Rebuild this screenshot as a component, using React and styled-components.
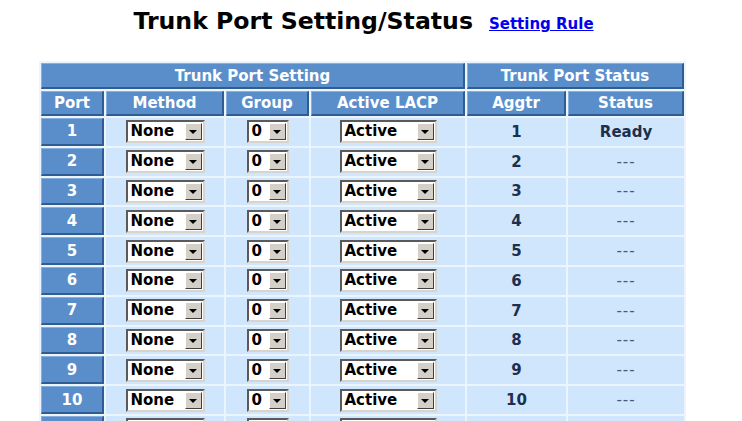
import React from 'react'
import styled, { createGlobalStyle } from 'styled-components'

const GlobalStyle = createGlobalStyle`
  html, body {
    margin: 0;
    padding: 0;
    background: #ffffff;
    overflow: hidden;
  }
  body {
    font-family: 'DejaVu Sans', Verdana, sans-serif;
  }
`

const Page = styled.div`
  width: 649px;
  margin-left: 39px;
`

const TitleRow = styled.div`
  display: flex;
  align-items: baseline;
  justify-content: center;
  gap: 16px;
  margin: 7px 0 23px;
  line-height: 28px;
`

const Title = styled.h1`
  margin: 0;
  font-size: 23.6px;
  font-weight: bold;
  color: #000;
`

const RuleLink = styled.a`
  font-size: 15px;
  font-weight: bold;
  color: #0000ee;
  text-decoration: underline;
`

const Table = styled.table`
  width: 647px;
  table-layout: fixed;
  border-collapse: separate;
  border-spacing: 2px;
  background: #ecf5fe;
`

const HeadCell = styled.th`
  height: ${({ $h }) => $h || 25}px;
  padding: 0;
  box-sizing: border-box;
  background: #5a8ecb;
  border-top: 1px solid #86b0df;
  border-left: 1px solid #86b0df;
  border-bottom: 2px solid #2f5d92;
  border-right: 2px solid #2f5d92;
  color: #ffffff;
  font-size: 15px;
  font-weight: bold;
  text-align: center;
  vertical-align: middle;
`

const PortCell = styled(HeadCell).attrs({ as: 'td' })`
  height: 27.8px;
`

const DataCell = styled.td`
  height: 27.8px;
  padding: 0;
  background: #d0e6fc;
  color: #1d2f4e;
  font-size: 15px;
  font-weight: bold;
  text-align: center;
  vertical-align: middle;
`

const Dash = styled.span`
  color: #4a5a74;
  letter-spacing: 1px;
  font-weight: normal;
`

const SelectBox = styled.div`
  display: inline-flex;
  align-items: stretch;
  box-sizing: border-box;
  width: ${({ $w }) => $w}px;
  height: 23px;
  vertical-align: middle;
  background: #ffffff;
  border-top: 2px solid #5a5a5a;
  border-left: 2px solid #5a5a5a;
  border-bottom: 2px solid #d8d4cc;
  border-right: 2px solid #d8d4cc;
  text-align: left;
`

const SelectValue = styled.span`
  flex: 1;
  padding-left: 3px;
  font-size: 15px;
  font-weight: bold;
  line-height: 19px;
  color: #000;
  overflow: hidden;
  white-space: nowrap;
`

const ArrowButton = styled.span`
  display: flex;
  align-items: center;
  justify-content: center;
  box-sizing: border-box;
  width: 17px;
  margin: 1px 1px 1px 0;
  background: #d4d0c8;
  border-top: 1px solid #ffffff;
  border-left: 1px solid #ffffff;
  border-bottom: 1px solid #404040;
  border-right: 1px solid #404040;
`

const Triangle = styled.span`
  width: 0;
  height: 0;
  border-left: 4px solid transparent;
  border-right: 4px solid transparent;
  border-top: 4px solid #000;
  margin-top: 1px;
`

const Select = ({ value, width }) => (
  <SelectBox $w={width}>
    <SelectValue>{value}</SelectValue>
    <ArrowButton>
      <Triangle />
    </ArrowButton>
  </SelectBox>
)

const ports = Array.from({ length: 12 }, (_, i) => i + 1)

export default function App() {
  return (
    <>
      <GlobalStyle />
      <Page>
        <TitleRow>
          <Title>Trunk Port Setting/Status</Title>
          <RuleLink href='#'>Setting Rule</RuleLink>
        </TitleRow>
        <Table>
          <colgroup>
            <col style={{ width: 63 }} />
            <col style={{ width: 118 }} />
            <col style={{ width: 83 }} />
            <col style={{ width: 154 }} />
            <col style={{ width: 99 }} />
            <col style={{ width: 116 }} />
          </colgroup>
          <thead>
            <tr>
              <HeadCell colSpan={4} $h={26}>
                Trunk Port Setting
              </HeadCell>
              <HeadCell colSpan={2} $h={26}>
                Trunk Port Status
              </HeadCell>
            </tr>
            <tr>
              <HeadCell>Port</HeadCell>
              <HeadCell>Method</HeadCell>
              <HeadCell>Group</HeadCell>
              <HeadCell>Active LACP</HeadCell>
              <HeadCell>Aggtr</HeadCell>
              <HeadCell>Status</HeadCell>
            </tr>
          </thead>
          <tbody>
            {ports.map((p) => (
              <tr key={p}>
                <PortCell>{p}</PortCell>
                <DataCell>
                  <Select value='None' width={79} />
                </DataCell>
                <DataCell>
                  <Select value='0' width={42} />
                </DataCell>
                <DataCell>
                  <Select value='Active' width={97} />
                </DataCell>
                <DataCell>{p}</DataCell>
                <DataCell>{p === 1 ? 'Ready' : <Dash>---</Dash>}</DataCell>
              </tr>
            ))}
          </tbody>
        </Table>
      </Page>
    </>
  )
}
